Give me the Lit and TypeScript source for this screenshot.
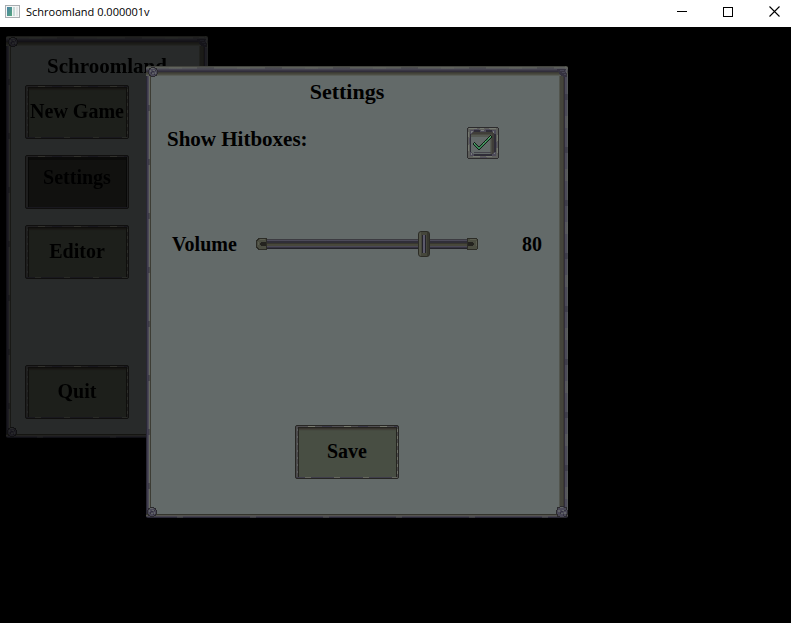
import { LitElement, html, css, svg } from "lit";
import { customElement, property, state } from "lit/decorators.js";

const lettering = css`
  :host {
    box-sizing: border-box;
    font-family: "Liberation Serif", "Noto Sans", serif;
    font-weight: 700;
    font-size: 20px;
    line-height: 24px;
    color: #000;
  }
  *,
  *::before,
  *::after {
    box-sizing: border-box;
  }
`;

/* A rivet of the stone frame, drawn on a 10 by 10 pixel grid. */
const rivet = svg`
  <path fill="#2b2a2e" d="M3 0h4v1h2v2h1v4h-1v2h-2v1h-4v-1h-2v-2h-1v-4h1v-2h2z"/>
  <path fill="#4a4857" d="M3 1h4v1h1v1h1v4h-1v1h-1v1h-4v-1h-1v-1h-1v-4h1v-1h1z"/>
  <path fill="#626467" d="M3 1h3v1h-3zM2 3h1v2h-1zM5 3h2v1h-2zM7 5h1v2h-1zM4 6h2v1h-2z"/>
  <path fill="#343240" d="M4 4h2v1h-2zM6 7h1v1h-1zM3 5h1v2h-1zM7 3h1v1h-1z"/>
`;

/* The top right corner is a plain dark bracket. */
const bracket = svg`
  <path fill="#35323f" d="M0 2h10v8h-4v-1h-2v-1h-1v-1h-1v-2h-1v-1h-1z"/>
  <path fill="#474554" d="M3 3h4v1h-4zM5 5h3v1h-3zM7 7h2v1h-2zM8 3h1v2h-1z"/>
  <path fill="#5b5c5d" d="M2 0h5v1h-5zM9 1h1v5h-1z"/>
`;

/* Columns of the tick mark: left edge and top edge of each one-pixel column. */
const tickColumns = [
  [7, 16], [8, 17], [9, 18], [10, 19], [11, 20], [12, 20], [13, 19], [14, 18], [15, 17],
  [16, 16], [17, 15], [18, 14], [19, 13], [20, 12], [21, 11], [22, 10], [23, 9],
];
const columnPath = (dx: number, dy: number, width: number, height: number) =>
  tickColumns.map(([x, y]) => `M${x + dx} ${y + dy}h${width}v${height}h${-width}z`).join("");

@customElement("stone-panel")
class StonePanel extends LitElement {
  static styles = [
    lettering,
    css`
      :host {
        display: flex;
        flex-direction: column;
        position: relative;
        border-radius: 2px;
        background:
          repeating-linear-gradient(90deg, transparent 0 23px, #6b6e6444 23px 36px, transparent 36px 51px, #35333f55 51px 68px) 0 1px / 100% 2px no-repeat,
          repeating-linear-gradient(90deg, transparent 0 31px, #66685f55 31px 37px, transparent 37px 73px) 0 100% / 100% 2px no-repeat,
          repeating-linear-gradient(0deg, transparent 0 19px, #6b6e6455 19px 31px, transparent 31px 47px, #2b293666 47px 53px) 100% 0 / 3px 100% no-repeat,
          repeating-linear-gradient(0deg, transparent 0 29px, #2b293677 29px 35px, transparent 35px 54px) 2px 0 / 2px 100% no-repeat,
          linear-gradient(180deg, #43443f 0 1px, #5c5f59 1px 2px, #55565a 2px 3px, #464450 3px 4px, #393643 4px 5px, #302d3a 5px 6px, #3b3a35 6px 7px, #44443b 7px 8px, #4c4d44 8px 9px, #595d57 9px) 0 0 / 100% 10px no-repeat,
          linear-gradient(0deg, #292735 0 1px, #45434f 1px 2px, #55544f 2px 3px, #34342d 3px) 0 100% / 100% 4px no-repeat,
          linear-gradient(90deg, #292735 0 1px, #3f3c4c 1px 2px, #4d4b59 2px 3px, #66695f 3px 4px, #3c3c34 4px) 0 0 / 5px 100% no-repeat,
          linear-gradient(270deg, #55585a 0 1px, #4b4957 1px 3px, #302d3a 3px 4px, #3b3932 4px 5px, #44443b 5px 8px, #52554e 8px) 100% 0 / 9px 100% no-repeat,
          #636a69;
      }
      :host([dimmed]) {
        filter: brightness(0.4);
      }
      svg {
        position: absolute;
        width: 10px;
        height: 10px;
      }
      .tl { top: 1px; left: 2px; }
      .tr { top: 1px; right: 1px; }
      .bl { bottom: 1px; left: 1px; }
      .br { bottom: 0; right: 0; width: 12px; height: 12px; }
    `,
  ];

  render() {
    return html`
      ${["tl", "tr", "bl", "br"].map(
        (c) => html`<svg class=${c} viewBox="0 0 10 10" shape-rendering="crispEdges" aria-hidden="true">${c === "tr" ? bracket : rivet}</svg>`
      )}
      <slot></slot>
    `;
  }
}

@customElement("stone-button")
class StoneButton extends LitElement {
  @property({ type: Boolean, reflect: true }) pressed = false;

  static styles = [
    lettering,
    css`
      :host {
        display: block;
        width: 104px;
      }
      button {
        display: block;
        width: 100%;
        height: 54px;
        padding: 0 0 3px;
        font: inherit;
        color: inherit;
        white-space: nowrap;
        border: 1px solid #272623;
        border-radius: 2px;
        background:
          repeating-linear-gradient(90deg, transparent 0 12px, #77796f 12px 19px, transparent 19px 26px, #3c3a4a 26px 36px) 0 0 / 100% 1px no-repeat,
          repeating-linear-gradient(90deg, transparent 0 9px, #65665f 9px 15px, transparent 15px 29px) 0 100% / 100% 1px no-repeat,
          repeating-linear-gradient(0deg, transparent 0 4px, #6d7066 4px 7px) 100% 0 / 1px 100% no-repeat,
          repeating-linear-gradient(0deg, transparent 0 5px, #5f6160 5px 7px) 1px 0 / 1px 100% no-repeat,
          linear-gradient(#504e52, #504e52) 0 0 / 100% 1px no-repeat,
          linear-gradient(#3f3d4b, #3f3d4b) 0 100% / 100% 1px no-repeat,
          linear-gradient(90deg, #4b4a4c 0 2px, #25241f 2px) 0 0 / 3px 100% no-repeat,
          linear-gradient(270deg, #4b4a4c 0 1px, #25241f 1px) 100% 0 / 2px 100% no-repeat,
          linear-gradient(180deg, #25241f 1px 2px, #38342e 2px 3px, #403f37 3px 4px, #454a40 4px) 0 0 / 100% 5px no-repeat,
          #484e43;
      }
      :host([pressed]) button {
        background:
          repeating-linear-gradient(90deg, transparent 0 12px, #77796f 12px 19px, transparent 19px 26px, #3c3a4a 26px 36px) 0 0 / 100% 1px no-repeat,
          linear-gradient(#504e52, #504e52) 0 0 / 100% 1px no-repeat,
          linear-gradient(#3f3d4b, #3f3d4b) 0 100% / 100% 1px no-repeat,
          linear-gradient(90deg, #4b4a4c 0 2px, #151512 2px) 0 0 / 3px 100% no-repeat,
          linear-gradient(270deg, #4b4a4c 0 1px, #151512 1px) 100% 0 / 2px 100% no-repeat,
          linear-gradient(#1c1c19, #1c1c19) 0 0 / 100% 4px no-repeat,
          #2a2a26;
        padding-bottom: 10px;
      }
    `,
  ];

  render() {
    return html`<button type="button" aria-pressed=${this.pressed ? "true" : "false"}><slot></slot></button>`;
  }
}

@customElement("main-menu")
class MainMenu extends LitElement {
  static styles = [
    lettering,
    css`
      :host {
        display: block;
      }
      stone-panel {
        min-height: 402px;
        padding: 18px 19px 19px;
      }
      h1 {
        margin: 0 0 7px;
        font-size: 21px;
        line-height: 24px;
        text-align: center;
      }
      nav {
        flex: 1;
        display: flex;
        flex-direction: column;
        gap: 16px;
      }
      .last {
        margin-top: auto;
      }
    `,
  ];

  render() {
    return html`
      <stone-panel dimmed>
        <h1>Schroomland</h1>
        <nav>
          <stone-button>New Game</stone-button>
          <stone-button pressed>Settings</stone-button>
          <stone-button>Editor</stone-button>
          <stone-button class="last">Quit</stone-button>
        </nav>
      </stone-panel>
    `;
  }
}

@customElement("settings-dialog")
class SettingsDialog extends LitElement {
  @state() private volume = 80;
  @state() private hitboxes = true;

  static styles = [
    lettering,
    css`
      :host {
        display: block;
      }
      stone-panel {
        min-height: 452px;
        padding: 14px 20px 39px;
      }
      h2 {
        margin: 0;
        padding-right: 20px;
        font-size: 22px;
        line-height: 24px;
        text-align: center;
      }
      form {
        flex: 1;
        display: flex;
        flex-direction: column;
      }
      .row {
        display: flex;
        align-items: center;
      }
      .hitboxes {
        justify-content: space-between;
        align-items: flex-start;
        margin-top: 23px;
        padding: 0 49px 0 1px;
        font-size: 21px;
      }
      .volume {
        margin-top: 72px;
        padding: 0 6px;
      }
      .volume label {
        width: 84px;
      }
      output {
        margin-left: auto;
      }
      .check,
      .slider {
        display: grid;
      }
      .check > *,
      .slider > * {
        grid-area: 1 / 1;
      }
      .check {
        width: 32px;
        height: 32px;
      }
      svg {
        display: block;
        pointer-events: none;
      }
      input {
        appearance: none;
        margin: 0;
        background: none;
      }
      .check input {
        width: 32px;
        height: 32px;
      }
      .tick {
        visibility: hidden;
      }
      input:checked + svg .tick {
        visibility: visible;
      }
      .slider {
        width: 222px;
        align-items: center;
      }
      .track {
        width: 100%;
        height: 12px;
        display: flex;
        align-items: center;
      }
      .track i {
        flex: 1;
        height: 10px;
        background: linear-gradient(180deg, #3c3b41 0 1px, #4c4a58 1px 2px, #302e38 2px 4px, #38372f 4px 5px, #47473b 5px 7px, #4a4856 7px 8px, #35333f 8px 9px, #24232a 9px);
      }
      .slider input {
        width: 214px;
        height: 26px;
      }
      .slider input::-webkit-slider-thumb {
        appearance: none;
        width: 12px;
        height: 26px;
        border: 1px solid #2c2c26;
        border-radius: 3px;
        background:
          linear-gradient(90deg, #23222a 0 1px, #5c5a6b 1px 3px, #23222a 3px) 50% 50% / 4px 18px no-repeat,
          linear-gradient(90deg, #545649 0 2px, #45463b 2px 8px, #37372f 8px);
      }
      stone-button {
        margin: 0 auto;
      }
      .actions {
        margin-top: auto;
        padding-right: 20px;
      }
    `,
  ];

  render() {
    return html`
      <stone-panel role="dialog" aria-label="Settings">
        <h2>Settings</h2>
        <form>
          <div class="row hitboxes">
            <label for="hitboxes">Show Hitboxes:</label>
            <div class="check">
              <input
                id="hitboxes"
                type="checkbox"
                .checked=${this.hitboxes}
                @change=${(e: Event) => (this.hitboxes = (e.target as HTMLInputElement).checked)}
              />
              <svg width="32" height="32" viewBox="0 0 32 32" shape-rendering="crispEdges" aria-hidden="true">
                <path fill="#2c2b2c" d="M1 0h30v1h1v30h-1v1h-30v-1h-1v-30h1z" />
                <path fill="#5d5e5b" d="M1 1h30v30h-30z" />
                <path fill="#757970" d="M2 1h8v1h-8zM13 1h4v1h-4zM22 1h7v1h-7zM1 5h1v5h-1zM1 18h1v6h-1zM30 8h1v6h-1zM30 21h1v5h-1zM6 29h7v1h-7zM19 29h6v1h-6z" />
                <path fill="#2f2d38" d="M3 3h26v26h-26z" />
                <path fill="#504d5b" d="M2 11h1v6h-1zM29 15h1v6h-1zM7 2h5v1h-5zM18 2h5v1h-5zM13 30h7v1h-7z" />
                <path fill="#403e39" d="M4 5h23v22h-23z" />
                <path fill="#4b4b43" d="M4 7h21v20h-21z" />
                <path fill="#565a53" d="M4 8h20v19h-20z" />
                <path fill="#636a69" d="M4 10h19v17h-19z" />
                <path fill="#43424a" d="M7 25h17v1h-17z" />
                <path fill="#4d4b59" d="M3 3h4v2h-1v1h-1v1h-2zM25 3h4v4h-2v-1h-1v-1h-1zM3 25h2v1h1v1h1v2h-4zM27 25h2v4h-4v-2h1v-1h1zM13 3h6v2h-6z" />
                <path fill="#787b7a" d="M4 4h2v1h-1v1h-1zM26 4h1v2h-1zM4 26h1v2h-1zM27 26h1v1h-1zM14 3h3v1h-3z" />
                <g class="tick">
                  <path fill="#101d16" d=${columnPath(0, -1, 1, 4) + columnPath(-1, 0, 3, 2)} />
                  <path fill="#3b8757" d=${columnPath(0, 0, 1, 2)} />
                  <path fill="#5aa56f" d="M21 11h1v1h-1zM22 10h1v1h-1zM23 9h1v1h-1zM18 14h1v1h-1zM16 16h1v1h-1zM7 16h1v1h-1z" />
                </g>
              </svg>
            </div>
          </div>
          <div class="row volume">
            <label for="volume">Volume</label>
            <div class="slider">
              <div class="track">
                <svg width="11" height="12" viewBox="0 0 11 12" shape-rendering="crispEdges" aria-hidden="true">
                  <path fill="#2c2c26" d="M2 0h9v12h-9v-1h-1v-1h-1v-8h1v-1h1z" />
                  <path fill="#4b4d41" d="M3 1h7v3h-5v1h-1v2h1v1h5v3h-7v-1h-1v-1h-1v-6h1v-1h1z" />
                  <path fill="#24231f" d="M5 4h5v4h-5v-1h-1v-2h1z" />
                  <path fill="#5b5d50" d="M4 1h5v1h-5zM2 4h1v3h-1z" />
                </svg>
                <i></i>
                <svg width="11" height="12" viewBox="0 0 11 12" shape-rendering="crispEdges" aria-hidden="true">
                  <path fill="#2c2c26" d="M0 0h10v1h1v10h-1v1h-10z" />
                  <path fill="#4b4d41" d="M1 1h9v10h-9v-3h5v-1h1v-2h-1v-1h-5z" />
                  <path fill="#24231f" d="M1 4h5v1h1v2h-1v1h-5z" />
                  <path fill="#5b5d50" d="M3 1h6v1h-6zM9 3h1v5h-1z" />
                </svg>
              </div>
              <input
                id="volume"
                type="range"
                min="0"
                max="100"
                .value=${String(this.volume)}
                @input=${(e: Event) => (this.volume = Number((e.target as HTMLInputElement).value))}
              />
            </div>
            <output for="volume">${this.volume}</output>
          </div>
          <div class="actions"><stone-button>Save</stone-button></div>
        </form>
      </stone-panel>
    `;
  }
}

@customElement("app-root")
class AppRoot extends LitElement {
  static styles = css`
    :host {
      display: flex;
      flex-direction: column;
      min-height: 100vh;
      background: #000;
    }
    header {
      box-sizing: border-box;
      display: flex;
      align-items: center;
      height: 27px;
      padding: 0 0 4px 5px;
      background: #fff;
      color: #000;
      font: 11px/16px "Open Sans", "Noto Sans", sans-serif;
    }
    .title {
      flex: 1;
      margin-left: 6px;
    }
    .controls {
      display: flex;
      gap: 12px;
    }
    .controls button {
      display: grid;
      place-items: center;
      width: 34px;
      height: 23px;
      padding: 0;
      border: 0;
      background: none;
    }
    svg {
      display: block;
    }
    main {
      flex: 1;
      position: relative;
      overflow: hidden;
    }
    main-menu {
      position: absolute;
      left: 6px;
      top: 9px;
      width: 202px;
    }
    settings-dialog {
      position: absolute;
      left: 146px;
      top: 39px;
      width: 422px;
    }
  `;

  render() {
    return html`
      <header>
        <svg width="15" height="13" viewBox="0 0 15 13" shape-rendering="crispEdges" aria-hidden="true">
          <defs>
            <linearGradient id="pane" x1="0" y1="0" x2="1" y2="1">
              <stop offset="0" stop-color="#4a83a6" />
              <stop offset="1" stop-color="#55a57c" />
            </linearGradient>
          </defs>
          <path fill="#a9adb0" d="M0 0h15v13h-15z" />
          <path fill="#f4f5f5" d="M1 1h13v11h-13z" />
          <path fill="url(#pane)" d="M2 2h5v9h-5z" />
          <path fill="#c9dcd9" d="M8 2h2v9h-2z" />
          <path fill="#e3e6e7" d="M11 2h2v9h-2z" />
        </svg>
        <span class="title">Schroomland 0.000001v</span>
        <div class="controls">
          <button type="button" aria-label="Minimize">
            <svg width="10" height="11" viewBox="0 0 10 11" shape-rendering="crispEdges"><path d="M0 5h10v1h-10z" /></svg>
          </button>
          <button type="button" aria-label="Maximize">
            <svg width="10" height="10" viewBox="0 0 10 10" shape-rendering="crispEdges">
              <path fill-rule="evenodd" d="M0 0h10v10h-10zM1 1v8h8v-8z" />
            </svg>
          </button>
          <button type="button" aria-label="Close">
            <svg width="11" height="11" viewBox="0 0 11 11"><path fill="none" stroke="#000" stroke-width="1.100" d="M.5 .5l10 10M10.500 .5l-10 10" /></svg>
          </button>
        </div>
      </header>
      <main>
        <main-menu></main-menu>
        <settings-dialog></settings-dialog>
      </main>
    `;
  }
}
